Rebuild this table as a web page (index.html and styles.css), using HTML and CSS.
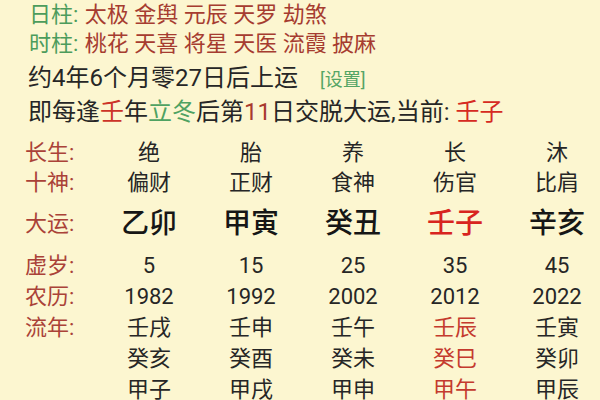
FILE: index.html
```html
<!DOCTYPE html>
<html lang="zh-CN">
<head>
<meta charset="utf-8">
<link rel="stylesheet" href="styles.css">
</head>
<body>
<div class="page">
  <div class="shensha">
    <div class="sline"><span class="g">日柱</span><span class="g colon">:</span> <span class="r">太极 金舆 元辰 天罗 劫煞</span></div>
    <div class="sline"><span class="g">时柱</span><span class="g colon">:</span> <span class="r">桃花 天喜 将星 天医 流霞 披麻</span></div>
  </div>
  <div class="info">
    <div class="iline">约4年6个月零27日后上运<span class="set">[设置]</span></div>
    <div class="iline">即每逢<span class="red">壬</span>年<span class="grn">立冬</span>后第<span class="br">11</span>日交脱大运,当前: <span class="cur">壬子</span></div>
  </div>
  <div class="table">
    <div class="row">
      <div class="lab">长生:</div>
      <div class="c">绝</div><div class="c">胎</div><div class="c">养</div><div class="c">长</div><div class="c">沐</div>
    </div>
    <div class="row">
      <div class="lab">十神:</div>
      <div class="c">偏财</div><div class="c">正财</div><div class="c">食神</div><div class="c">伤官</div><div class="c">比肩</div>
    </div>
    <div class="row big">
      <div class="lab">大运:</div>
      <div class="c">乙卯</div><div class="c">甲寅</div><div class="c">癸丑</div><div class="c now">壬子</div><div class="c">辛亥</div>
    </div>
    <div class="row">
      <div class="lab">虚岁:</div>
      <div class="c">5</div><div class="c">15</div><div class="c">25</div><div class="c">35</div><div class="c">45</div>
    </div>
    <div class="row">
      <div class="lab">农历:</div>
      <div class="c">1982</div><div class="c">1992</div><div class="c">2002</div><div class="c">2012</div><div class="c">2022</div>
    </div>
    <div class="row">
      <div class="lab">流年:</div>
      <div class="c">壬戌</div><div class="c">壬申</div><div class="c">壬午</div><div class="c hl">壬辰</div><div class="c">壬寅</div>
    </div>
    <div class="row">
      <div class="lab"></div>
      <div class="c">癸亥</div><div class="c">癸酉</div><div class="c">癸未</div><div class="c hl">癸巳</div><div class="c">癸卯</div>
    </div>
    <div class="row">
      <div class="lab"></div>
      <div class="c">甲子</div><div class="c">甲戌</div><div class="c">甲申</div><div class="c hl">甲午</div><div class="c">甲辰</div>
    </div>
  </div>
</div>
</body>
</html>
```

FILE: styles.css
```css
html, body {
  margin: 0;
  padding: 0;
  background: #fcf6d0;
  overflow: hidden;
}
body {
  width: 600px;
  height: 400px;
  font-family: Roboto, "Noto Sans CJK SC", sans-serif;
  font-size: 22px;
  color: #262626;
}
.page {
  display: flex;
  flex-direction: column;
}
.shensha {
  padding-left: 29px;
}
.sline {
  height: 29px;
  line-height: 29px;
  white-space: nowrap;
}
.g { color: #4c9c5c; }
.colon { margin-right: 1px; }
.r { color: #a63c30; }
.info {
  padding-left: 28px;
  margin-top: 3px;
  font-size: 24px;
}
.iline {
  height: 34px;
  line-height: 34px;
  white-space: nowrap;
}
.set {
  color: #55a565;
  font-size: 18px;
  margin-left: 22px;
}
.red { color: #cc3328; }
.grn { color: #4fa262; }
.br { color: #a83a2e; }
.cur { color: #d62a22; }
.table {
  margin-top: 9px;
  padding-left: 25px;
  display: flex;
  flex-direction: column;
}
.row {
  display: grid;
  grid-template-columns: 73px repeat(5, 102px);
  height: 31px;
  line-height: 31px;
  white-space: nowrap;
}
.row:first-child,
.row:nth-child(2) {
  height: 30px;
  line-height: 30px;
}
.row.big {
  height: 52px;
  line-height: 52px;
}
.lab {
  color: #aa4238;
}
.c {
  text-align: center;
}
.big .c {
  font-size: 28px;
  font-weight: 500;
  color: #161616;
}
.big .c.now {
  color: #d8241e;
}
.c.hl {
  color: #c43a2e;
}
```
